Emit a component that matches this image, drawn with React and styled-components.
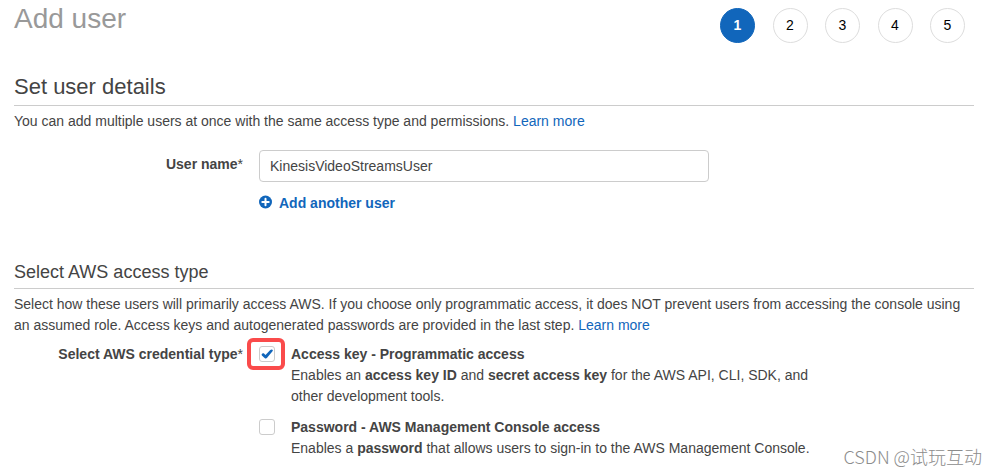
import React, { useState } from 'react';
import styled, { createGlobalStyle } from 'styled-components';

const GlobalStyle = createGlobalStyle`
	* {
		box-sizing: border-box;
	}
	body {
		margin: 0;
		background: #fff;
		color: #444;
		font-family: "Liberation Sans", Arial, sans-serif;
		font-size: 14px;
		line-height: 21px;
	}
`;

const Page = styled.main`
	position: relative;
	padding: 0 23px 16px 14px;
`;

const Header = styled.header`
	display: flex;
	justify-content: space-between;
	align-items: flex-start;
	margin-bottom: 30px;
`;

const Title = styled.h1`
	margin: 0;
	color: #999;
	font-size: 28px;
	font-weight: normal;
	line-height: 38px;
`;

const Steps = styled.ol`
	display: flex;
	justify-content: space-between;
	width: 245px;
	margin: 8px 9px 0 0;
	padding: 0;
	list-style: none;
`;

const Step = styled.li`
	display: flex;
	align-items: center;
	justify-content: center;
	width: 35px;
	height: 35px;
	border: 1px solid ${props => (props.$active ? '#16b' : '#ddd')};
	border-radius: 50%;
	background: ${props => (props.$active ? '#16b' : '#fff')};
	color: ${props => (props.$active ? '#fff' : '#000')};
	font-weight: ${props => (props.$active ? 'bold' : 'normal')};
`;

const Section = styled.section`
	& + & {
		margin-top: 47px;
	}
`;

const SectionTitle = styled.h2`
	margin: 0 0 5px;
	padding-bottom: 4px;
	border-bottom: 1px solid #ccc;
	font-size: 22px;
	font-weight: normal;
	line-height: 28px;
`;

const SubsectionTitle = styled(SectionTitle)`
	padding-bottom: 5px;
	font-size: 18px;
	line-height: 22px;
`;

const Description = styled.p`
	margin: 0;
`;

const Link = styled.a`
	color: #16b;
	text-decoration: none;
	&:hover {
		text-decoration: underline;
	}
`;

const FormRow = styled.div`
	display: grid;
	grid-template-columns: 229px minmax(0, 1fr);
	column-gap: 16px;
	margin-top: ${props => props.$space};
`;

const FieldLabel = styled.label`
	padding-top: ${props => (props.$input ? '4px' : '0')};
	font-weight: bold;
	text-align: right;
`;

const Required = styled.span`
	font-weight: normal;
`;

const TextInput = styled.input`
	display: block;
	width: 100%;
	max-width: 450px;
	height: 32px;
	padding: 0 10px;
	border: 1px solid #ccc;
	border-radius: 4px;
	background: #fff;
	color: #444;
	font: inherit;
`;

const AddButton = styled.button`
	display: flex;
	align-items: flex-start;
	gap: 6px;
	margin-top: 11px;
	padding: 0;
	border: 0;
	background: none;
	color: #16b;
	font: inherit;
	font-weight: bold;
	cursor: pointer;
	svg {
		margin-top: 2px;
	}
`;

const Options = styled.div`
	display: flex;
	flex-direction: column;
	gap: 10px;
	max-width: 560px;
`;

const Option = styled.div`
	display: flex;
	align-items: flex-start;
	gap: 16px;
`;

const CheckBox = styled.span`
	position: relative;
	flex: none;
	width: 16px;
	height: 16px;
	margin-top: 2px;
	color: #16b;
	svg {
		position: absolute;
		top: 2px;
		left: 2px;
		pointer-events: none;
	}
`;

const CheckInput = styled.input`
	display: block;
	width: 16px;
	height: 16px;
	margin: 0;
	border: 1px solid #ccc;
	border-radius: 3px;
	background: #fff;
	appearance: none;
`;

const Highlight = styled.span`
	position: absolute;
	inset: -8px -10px -8px -12px;
	border: 4px solid #fa4b4b;
	border-radius: 6px;
	pointer-events: none;
`;

const OptionLabel = styled.label`
	display: block;
	font-weight: bold;
`;

const Watermark = styled.div`
	position: absolute;
	right: 15px;
	bottom: 6px;
	color: #8c8c8c;
	font-family: "Noto Sans CJK SC", sans-serif;
	font-size: 18px;
	font-weight: 300;
	line-height: 26px;
`;

function PlusIcon() {
	return (
		<svg width="14" height="14" viewBox="0 0 14 14" aria-hidden="true">
			<circle cx="6.5" cy="7" r="6.5" fill="currentColor" />
			<path d="M6.5 3.8v6.4M3.3 7h6.4" stroke="#fff" strokeWidth="2" strokeLinecap="round" />
		</svg>
	);
}

function CheckIcon() {
	return (
		<svg width="12" height="12" viewBox="0 0 12 12" aria-hidden="true">
			<path
				d="M.7 6.3C1.2 5.2 2.3 5 3 5.6l1.5 1.3L9 2.2c1-.9 2.4-.9 2.8-.1.2.5-.1.9-.5 1.4L6.1 9.8c-.7.9-1.8.9-2.5.1L.9 7.4C.6 7.1.5 6.7.7 6.3z"
				fill="currentColor"
			/>
		</svg>
	);
}

function CredentialOption({ id, title, defaultChecked = false, highlighted = false, children }) {
	const [checked, setChecked] = useState(defaultChecked);
	return (
		<Option>
			<CheckBox>
				<CheckInput
					id={id}
					type="checkbox"
					checked={checked}
					onChange={e => setChecked(e.target.checked)}
				/>
				{checked && <CheckIcon />}
				{highlighted && <Highlight />}
			</CheckBox>
			<div>
				<OptionLabel htmlFor={id}>{title}</OptionLabel>
				<Description>{children}</Description>
			</div>
		</Option>
	);
}

export default function App() {
	const [userName, setUserName] = useState('KinesisVideoStreamsUser');
	return (
		<>
			<GlobalStyle />
			<Page>
				<Header>
					<Title>Add user</Title>
					<Steps>
						{[1, 2, 3, 4, 5].map(step => (
							<Step key={step} $active={step === 1}>
								{step}
							</Step>
						))}
					</Steps>
				</Header>
				<Section>
					<SectionTitle>Set user details</SectionTitle>
					<Description>
						You can add multiple users at once with the same access type and permissions.{' '}
						<Link href="#users">Learn more</Link>
					</Description>
					<FormRow $space="18px">
						<FieldLabel htmlFor="user-name" $input>
							User name<Required>*</Required>
						</FieldLabel>
						<div>
							<TextInput
								id="user-name"
								type="text"
								value={userName}
								onChange={e => setUserName(e.target.value)}
							/>
							<AddButton type="button">
								<PlusIcon />
								Add another user
							</AddButton>
						</div>
					</FormRow>
				</Section>
				<Section>
					<SubsectionTitle>Select AWS access type</SubsectionTitle>
					<Description>
						Select how these users will primarily access AWS. If you choose only programmatic access, it
						does NOT prevent users from accessing the console using an assumed role. Access keys and
						autogenerated passwords are provided in the last step. <Link href="#access">Learn more</Link>
					</Description>
					<FormRow $space="8px" role="group" aria-labelledby="credential-type">
						<FieldLabel as="div" id="credential-type">
							Select AWS credential type<Required>*</Required>
						</FieldLabel>
						<Options>
							<CredentialOption
								id="access-key"
								title="Access key - Programmatic access"
								defaultChecked
								highlighted
							>
								Enables an <b>access key ID</b> and <b>secret access key</b> for the AWS API, CLI, SDK,
								and other development tools.
							</CredentialOption>
							<CredentialOption id="password" title="Password - AWS Management Console access">
								Enables a <b>password</b> that allows users to sign-in to the AWS Management Console.
							</CredentialOption>
						</Options>
					</FormRow>
				</Section>
				<Watermark>CSDN @试玩互动</Watermark>
			</Page>
		</>
	);
}
